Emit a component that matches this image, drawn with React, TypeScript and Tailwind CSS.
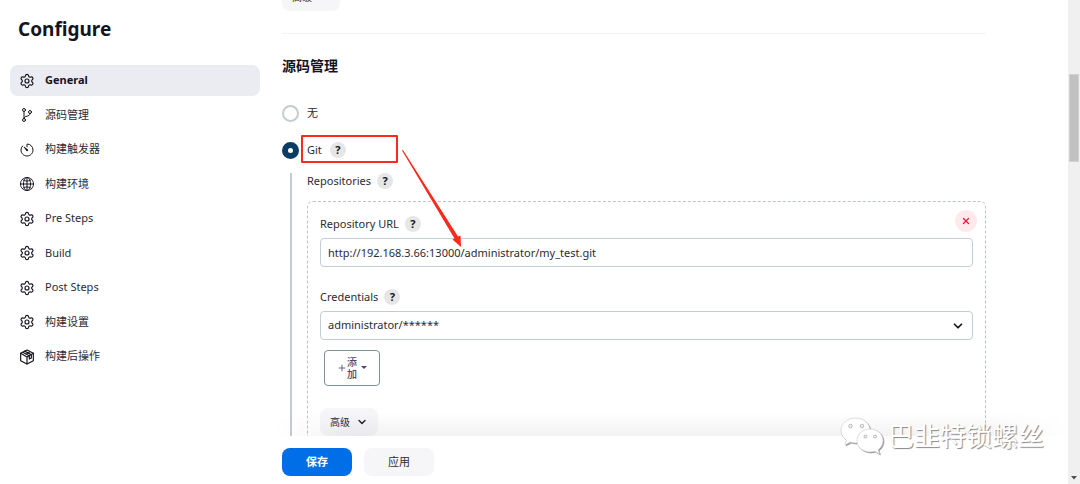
import type { ComponentType, ReactNode } from "react";
import { ChevronDown, Plus, Settings, X } from "lucide-react";
import { IoGitBranchOutline, IoGlobeOutline, IoTimerOutline } from "react-icons/io5";

type Icon = ComponentType<{ className?: string }>;
type NavItem = { label: string; icon: Icon; active?: boolean };

function GearIcon({ className }: { className?: string }) {
  return <Settings className={className} strokeWidth={1.75} />;
}

function CubeIcon({ className }: { className?: string }) {
  return (
    <svg viewBox="0 0 24 24" className={className} fill="none" stroke="currentColor" strokeWidth="1.75" strokeLinejoin="round" strokeLinecap="round">
      <path d="M12 1.500L21.500 6.500V17.500L12 22.500L2.500 17.500V6.500z" />
      <path d="M2.500 6.500L12 12L21.500 6.500M12 12V22.500" />
      <path d="M5.500 5L15.500 10.200V15L18.500 13.400V8.500L8.500 3.200M12 6.800L15.500 5" />
    </svg>
  );
}

const NAV: NavItem[] = [
  { label: "General", icon: GearIcon, active: true },
  { label: "源码管理", icon: IoGitBranchOutline },
  { label: "构建触发器", icon: IoTimerOutline },
  { label: "构建环境", icon: IoGlobeOutline },
  { label: "Pre Steps", icon: GearIcon },
  { label: "Build", icon: GearIcon },
  { label: "Post Steps", icon: GearIcon },
  { label: "构建设置", icon: GearIcon },
  { label: "构建后操作", icon: CubeIcon },
];

function Help({ topic }: { topic: string }) {
  return (
    <button
      type="button"
      aria-label={`Help for ${topic}`}
      className="flex size-4 items-center justify-center rounded-full bg-[#e6e6e6] text-[11px] leading-4 font-bold text-[#14141f]"
    >
      ?
    </button>
  );
}

function AdvancedButton() {
  return (
    <button
      type="button"
      className="flex h-7 items-center gap-1.5 self-start rounded-lg bg-[#f6f6f9] px-2.5 text-[10px]"
    >
      高级
      <ChevronDown className="size-3" strokeWidth={3} />
    </button>
  );
}

function FieldLabel({ htmlFor, children }: { htmlFor: string; children: string }) {
  return (
    <div className="flex h-4 items-center gap-1.5">
      <label htmlFor={htmlFor}>{children}</label>
      <Help topic={children} />
    </div>
  );
}

function Radio({ id, checked, children }: { id: string; checked?: boolean; children: ReactNode }) {
  return (
    <div className="flex h-[18px] items-center gap-2">
      <input
        id={id}
        type="radio"
        name="scm"
        defaultChecked={checked}
        className="size-[17px] shrink-0 appearance-none rounded-full border-2 border-[#c3ccd1] bg-white checked:border-[6px] checked:border-[#0b3c61]"
      />
      {children}
    </div>
  );
}

function Sidebar() {
  return (
    <aside className="w-[272px] shrink-0 pt-[17px] pr-3 pl-2.5">
      <h1 className="pl-2 text-[19px] leading-6 font-bold text-[#14141f]">Configure</h1>
      <nav className="mt-6 flex h-[307px] flex-col justify-between">
        {NAV.map(({ label, icon: Icon, active }) => (
          <a
            key={label}
            href="#"
            className={
              active
                ? "flex h-[31px] items-center gap-2.5 rounded-lg bg-[#ebecf2] pl-[9px] font-bold text-[#14141f]"
                : "flex h-[31px] items-center gap-2.5 rounded-lg pl-[9px]"
            }
          >
            <Icon className="size-4 shrink-0 text-[#14141f]" />
            {label}
          </a>
        ))}
      </nav>
    </aside>
  );
}

function Repository() {
  return (
    <div className="relative mt-3 rounded-md border border-dashed border-[#b9c3c8] px-3 pt-3.5 pb-12">
      <button
        type="button"
        aria-label="Delete repository"
        className="absolute top-2 right-2 flex size-[22px] items-center justify-center rounded-full bg-[#ffe9eb] text-[#e6193c]"
      >
        <X className="size-2.5" strokeWidth={3} />
      </button>

      <FieldLabel htmlFor="url">Repository URL</FieldLabel>
      <input
        id="url"
        type="text"
        defaultValue="http://192.168.3.66:13000/administrator/my_test.git"
        className="mt-1.5 h-[29px] w-full rounded border border-[#c3ccd1] px-[7px] outline-none"
      />

      <div className="mt-[22px]">
        <FieldLabel htmlFor="credentials">Credentials</FieldLabel>
      </div>
      <div className="relative mt-1.5">
        <select
          id="credentials"
          className="h-[29px] w-full appearance-none rounded border border-[#c3ccd1] bg-white px-[7px] outline-none"
        >
          <option>administrator/******</option>
        </select>
        <ChevronDown
          className="pointer-events-none absolute top-2 right-2 size-3.5 text-[#14141f]"
          strokeWidth={3}
        />
      </div>

      <button
        type="button"
        className="mt-2.5 ml-1 flex h-9 w-14 items-center justify-center rounded-sm border border-[#7e929c] text-[10px] leading-3 font-medium text-[#4d4869]"
      >
        <Plus className="size-2.5" strokeWidth={2} />
        <span className="w-2.5">添加</span>
        <svg viewBox="0 0 6 4" className="ml-1 h-1 w-1.5" fill="currentColor">
          <path d="M0 0h6L3 3z" />
        </svg>
      </button>

      <div className="mt-[22px] flex">
        <AdvancedButton />
      </div>
    </div>
  );
}

function Watermark() {
  return (
    <div className="pointer-events-none absolute right-9 bottom-[29px] flex items-center gap-1 text-white">
      <svg viewBox="0 0 44 38" className="h-[38px] w-11 drop-shadow-[1px_1px_0px_#999]" fill="#fff" stroke="#c8c8c8" strokeWidth="0.6">
        <path d="M15.500 1C7.500 1 1 6.500 1 13.500c0 4 2 7.300 5.300 9.600L5 28l5.300-2.800c1.700.5 3.400.8 5.200.8C23.500 26 30 20.500 30 13.500S23.500 1 15.500 1z" />
        <path d="M30 12c-7.200 0-13 5-13 11.500S22.800 35 30 35c1.600 0 3.200-.3 4.600-.8L39.500 37l-1.300-4.300c3-2.100 4.800-5.400 4.800-9.200C43 17 37.200 12 30 12z" />
        <g fill="#eee" stroke="#999">
          <circle cx="10.500" cy="9" r="1.800" />
          <circle cx="22" cy="9" r="1.800" />
          <circle cx="25.500" cy="19.500" r="1.500" />
          <circle cx="35" cy="19.500" r="1.500" />
        </g>
      </svg>
      <span className="text-[26px] leading-8 [text-shadow:1px_1px_1px_#888]">巴韭特锁螺丝</span>
    </div>
  );
}

export default function App() {
  return (
    <div className="relative flex h-screen overflow-hidden bg-white font-['Noto_Sans','Noto_Sans_CJK_SC',sans-serif] text-[11px] text-[#2b2b36]">
      <Sidebar />

      <main className="flex min-w-0 flex-1 flex-col">
        <div className="min-h-0 flex-1 overflow-hidden pr-[82px] pl-2.5">
          <div className="-mt-[17px]">
            <AdvancedButton />
          </div>
          <hr className="mt-[22px] border-[#f3f3f5]" />
          <h2 className="mt-[22px] text-[14px] leading-5 font-bold text-[#14141f]">源码管理</h2>

          <div className="mt-7">
            <Radio id="scm-none">
              <label htmlFor="scm-none">无</label>
            </Radio>
          </div>
          <div className="relative mt-[19px]">
            <Radio id="scm-git" checked>
              <label htmlFor="scm-git">Git</label>
              <Help topic="Git" />
            </Radio>
            {/* highlight box and arrow pointing to the URL */}
            <div className="pointer-events-none absolute -top-1.5 left-[19px] h-7 w-[97px] rounded-[1px] border-2 border-[#fb2a1c]" />
            <svg viewBox="0 0 60 98" className="pointer-events-none absolute top-[9px] left-[120px] z-10 h-[98px] w-[60px]" fill="#fb2a1c">
              <path d="M0 0.500L1 0L56 86.500L58.500 85.500L59 97L50.500 89.500L52.500 88.500z" />
            </svg>
          </div>

          <div className="mt-3.5 ml-2 border-l-2 border-[#c3ccd1] pl-[15px]">
            <div className="flex h-4 items-center gap-1.5">
              Repositories
              <Help topic="Repositories" />
            </div>
            <Repository />
          </div>
        </div>

        <footer className="relative flex h-12 shrink-0 items-center gap-3 bg-white pl-2.5">
          <div className="pointer-events-none absolute inset-x-0 -top-6 h-6 bg-linear-to-b from-transparent to-black/5 mask-x-from-90% mask-x-to-100%" />
          <button type="submit" className="mt-1 h-7 w-[70px] rounded-lg bg-[#006ee6] text-[11px] font-bold text-white">
            保存
          </button>
          <button type="button" className="mt-1 h-7 w-[70px] rounded-lg bg-[#f6f6f9] text-[11px]">
            应用
          </button>
        </footer>
      </main>

      {/* page scrollbar */}
      <div className="flex w-3 shrink-0 flex-col items-center justify-between bg-[#f0f0f0] pt-[74px] pb-1">
        <div className="h-[88px] w-2.5 border border-[#d0d0d0] bg-[#c1c1c1]" />
        <svg viewBox="0 0 6 4" className="h-1 w-1.5" fill="#505050">
          <path d="M0 0h6L3 3.500z" />
        </svg>
      </div>

      <Watermark />
    </div>
  );
}
